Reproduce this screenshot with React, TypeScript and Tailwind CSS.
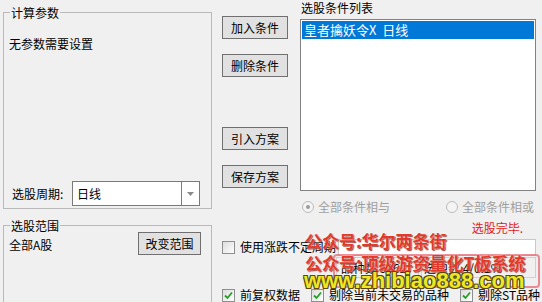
import React from "react";

const FONT = { fontFamily: '"Noto Sans CJK SC", "Microsoft YaHei", sans-serif' };

function WinButton({ label, className = "" }: { label: string; className?: string }) {
  return (
    <div
      className={`flex h-[23px] items-center justify-center border border-[#707070] bg-[#e1e1e1] text-[12px] leading-[16px] text-black ${className}`}
    >
      {label}
    </div>
  );
}

function CheckBox({ checked }: { checked?: boolean }) {
  return (
    <div className="flex h-[13px] w-[13px] shrink-0 items-center justify-center border border-[#8e8f8f] bg-gradient-to-br from-[#dcdcdc] to-white">
      {checked && (
        <svg width="9" height="9" viewBox="0 0 9 9">
          <path d="M1 4.5 L3.5 7 L8 1.5" fill="none" stroke="#21a121" strokeWidth="1.8" />
        </svg>
      )}
    </div>
  );
}

function Radio({ checked, label }: { checked?: boolean; label: string }) {
  return (
    <div className="flex items-center gap-[4px] text-[#a0a0a0]">
      <div className="flex h-[12px] w-[12px] items-center justify-center rounded-full border border-[#bcbcbc] bg-[#f4f4f4]">
        {checked && <div className="h-[4px] w-[4px] rounded-full bg-[#9a9a9a]" />}
      </div>
      <span>{label}</span>
    </div>
  );
}

function GroupTitle({ title }: { title: string }) {
  return (
    <div className="-mt-[8px] ml-[6px] self-start bg-[#f0f0f0] px-[1px] leading-[16px]">{title}</div>
  );
}

export default function App() {
  return (
    <div
      className="relative h-[302px] w-[542px] overflow-hidden bg-[#f0f0f0] text-[12px] leading-[16px] text-black"
      style={FONT}
    >
      <div className="flex">
        {/* 左侧 */}
        <div className="ml-[3px] flex w-[209px] flex-col">
          <div className="mt-[12px] flex h-[197px] flex-col border border-[#b9b9b9]">
            <GroupTitle title="计算参数" />
            <div className="ml-[5px] mt-[15px]">无参数需要设置</div>
            <div className="mb-[2px] mt-auto flex items-center">
              <span className="ml-[8px] w-[60px]">选股周期:</span>
              <div className="flex h-[25px] w-[128px] border border-[#7a7a7a] bg-white">
                <span className="flex-1 pl-[4px] leading-[23px]">日线</span>
                <div className="flex w-[18px] items-center justify-center border-l border-[#7a7a7a]">
                  <svg width="7" height="4" viewBox="0 0 7 4">
                    <path d="M0 0 L7 0 L3.5 4 Z" fill="#8a8a8a" />
                  </svg>
                </div>
              </div>
            </div>
          </div>
          <div className="mt-[16px] flex h-[100px] flex-col border border-[#b9b9b9]">
            <GroupTitle title="选股范围" />
            <div className="-mt-[2px] flex items-start justify-between pl-[5px] pr-[10px]">
              <span className="pt-[5px]">全部A股</span>
              <WinButton label="改变范围" className="w-[63px]" />
            </div>
          </div>
        </div>

        {/* 右侧 */}
        <div className="ml-[10px] flex w-[314px] flex-col">
          <div className="flex h-[215px]">
            <div className="flex w-[66px] flex-col pt-[16px]">
              <WinButton label="加入条件" />
              <WinButton label="删除条件" className="mt-[15px]" />
              <WinButton label="引入方案" className="mt-[50px]" />
              <WinButton label="保存方案" className="mt-[15px]" />
            </div>
            <div className="ml-[12px] flex w-[236px] flex-col">
              <div className="pl-[1px]">选股条件列表</div>
              <div className="mt-[3px] h-[172px] border border-[#828282] bg-white p-[1px]">
                <div className="h-[18px] bg-[#0078d7] pl-[2px] text-[13px] leading-[18px] text-white">
                  皇者擒妖令X&nbsp;&nbsp;日线
                </div>
              </div>
              <div className="ml-[2px] mt-[8px] flex h-[16px] items-center">
                <div className="w-[144px]">
                  <Radio checked label="全部条件相与" />
                </div>
                <Radio label="全部条件相或" />
              </div>
            </div>
          </div>

          <div className="mt-[5px] flex justify-end pr-[13px] text-[#e0201a]">选股完毕.</div>
          <div className="mt-[3px] flex h-[16px] items-center">
            <CheckBox />
            <span className="ml-[5px]">使用涨跌不定周期</span>
            <div className="ml-auto h-[17px] w-[198px] border border-[#c8c8c8] bg-white" />
          </div>
          <div className="mt-[2px] flex h-[21px] justify-end gap-[2px]">
            <div className="w-[83px] border border-[#d0d0d0] pl-[4px] leading-[19px]">品种数 5362</div>
            <div className="w-[115px] border border-[#d0d0d0] pl-[2px] leading-[19px]">选中数 4/0.1%</div>
          </div>
          <div className="mt-[9px] flex h-[16px] items-center whitespace-nowrap">
            <div className="flex w-[89px] shrink-0 items-center gap-[5px]">
              <CheckBox checked />
              <span>前复权数据</span>
            </div>
            <div className="flex w-[149px] shrink-0 items-center gap-[5px]">
              <CheckBox checked />
              <span>剔除当前未交易的品种</span>
            </div>
            <div className="flex shrink-0 items-center gap-[5px]">
              <CheckBox checked />
              <span>剔除ST品种</span>
            </div>
          </div>
        </div>
      </div>

      {/* 水印 */}
      <div className="absolute left-[333px] top-[254px] h-[34px] w-[207px] rounded-[4px] border-2 border-[#e8707a]/80" />
      <div className="absolute left-[305px] top-[232px] text-[17px] font-bold leading-[18px] text-[#e2392a] [text-shadow:0_0_2px_#fff,1px_1px_1px_#7a1a10]">
        公众号:华尔两条街
      </div>
      <div className="absolute left-[305px] top-[253px] text-[17px] font-bold leading-[19px] text-[#e2392a] [text-shadow:0_0_2px_#fff,1px_1px_1px_#7a1a10]">
        公众号:顶级游资量化T板系统
      </div>
      <div
        className="absolute left-[304px] top-[269px] text-[22px] font-bold leading-[24px] text-[#efe624] [text-shadow:1px_1px_0_#5a4810,-1px_-1px_0_#5a4810,1px_-1px_0_#5a4810,-1px_1px_0_#5a4810]"
        style={{ fontFamily: '"Liberation Sans", Arial, sans-serif' }}
      >
        www.zhibiao888.com
      </div>
    </div>
  );
}
